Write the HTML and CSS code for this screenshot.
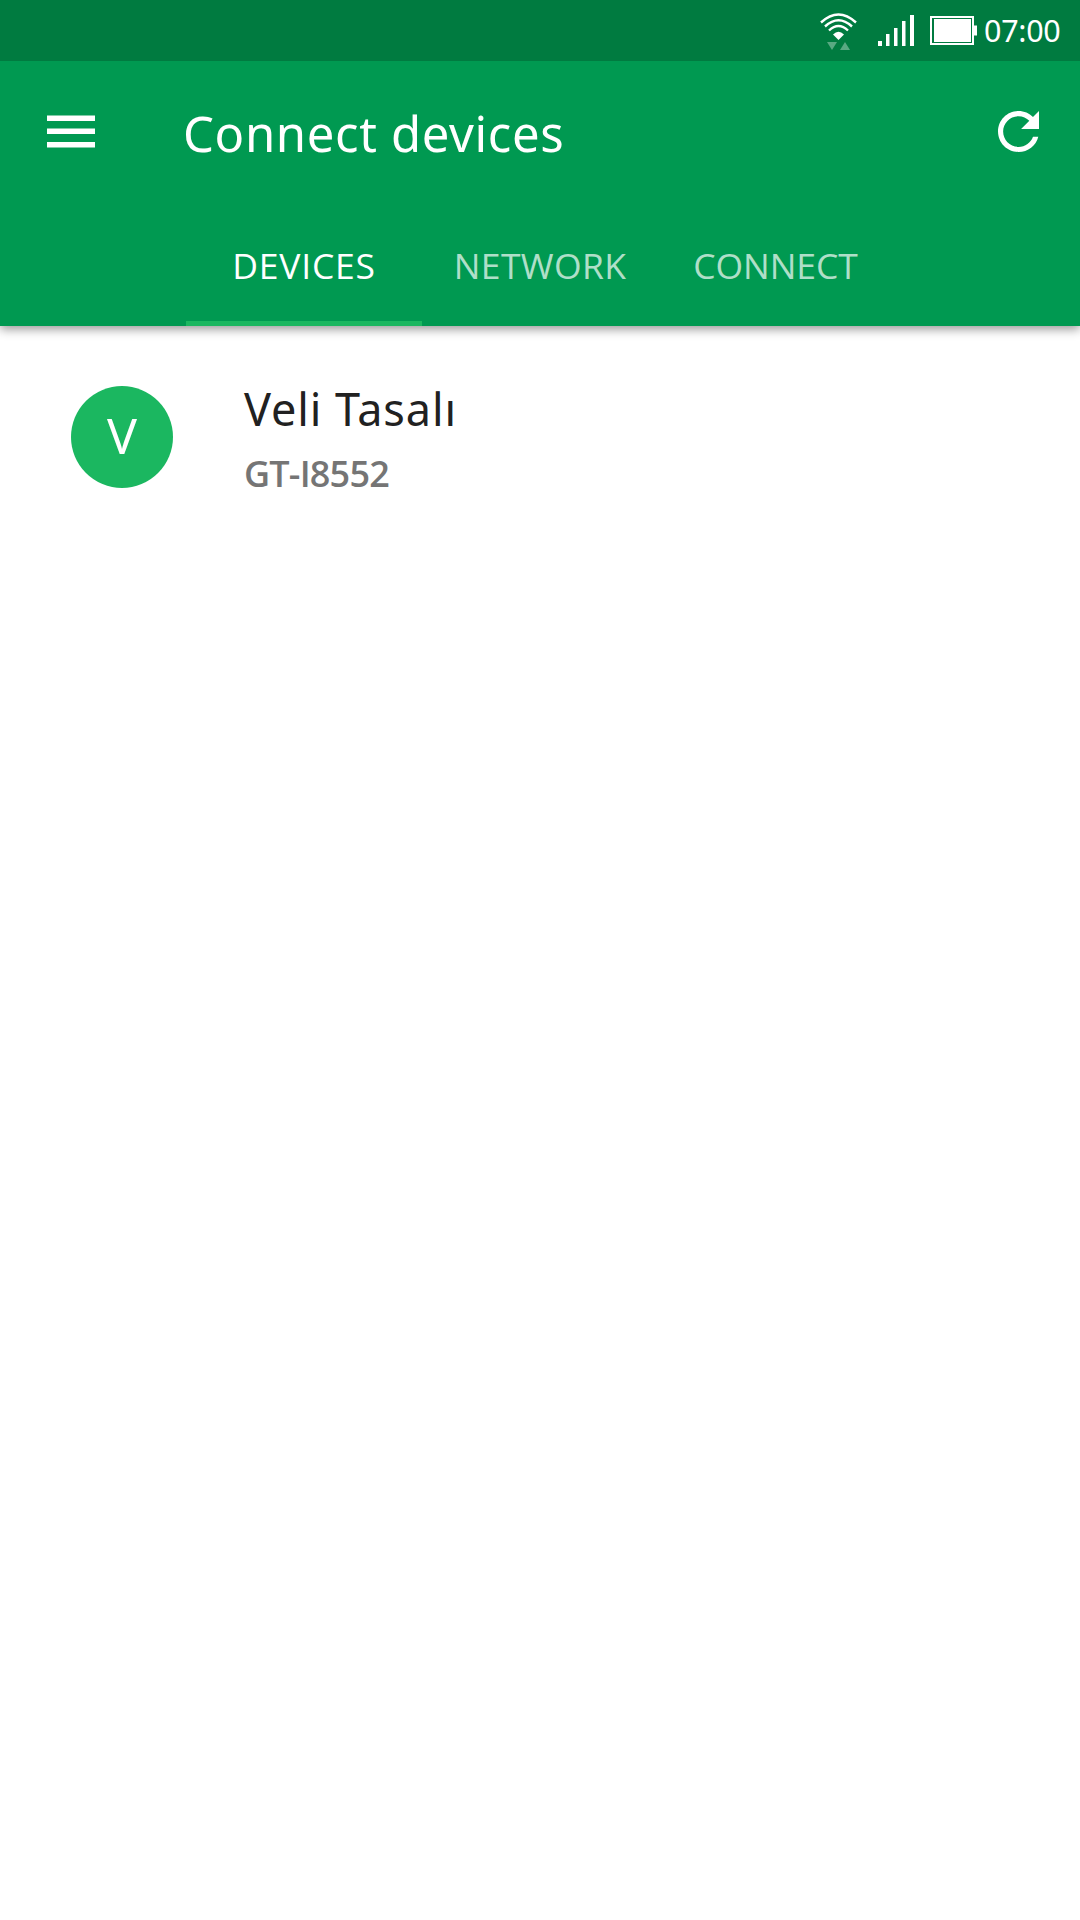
FILE: index.html
```html
<!DOCTYPE html>
<html lang="en">
<head>
<meta charset="utf-8">
<title>Connect devices</title>
<link rel="stylesheet" href="styles.css">
</head>
<body>
<div class="status-bar">
  <svg class="status-icons" width="180" height="61" viewBox="0 0 180 61" aria-hidden="true">
    <g fill="none" stroke="#fff" stroke-width="2.4">
      <path d="M21 22.5Q38.5 6.500 56 22.500"/>
      <path d="M25 26.500Q38.500 14 52 26.500"/>
      <path d="M29 30.500Q38.500 21.500 48 30.500"/>
    </g>
    <path d="M33 34.500Q38.500 29 44 34.500L38.500 40Z" fill="#fff"/>
    <path d="M27 42H37L32 50ZM40 50H50L45 42Z" fill="#fff" fill-opacity=".35"/>
    <path d="M78 41h4v5h-4zM86 34h3.500v12H86zM94 28h3.500v18H94zM102 21h3.500v25H102zM110 15h4v31h-4z" fill="#fff"/>
    <path d="M131 17h42v27h-42z" fill="none" stroke="#fff" stroke-width="2"/>
    <path d="M134 19h37v23h-37zM174 25.500h3v10h-3z" fill="#fff"/>
  </svg>
  <span class="clock">07:00</span>
</div>
<header class="app-bar">
  <div class="toolbar">
    <svg class="menu-icon" width="48" height="34" viewBox="0 0 48 34" aria-label="Menu">
      <path d="M0 .5h48v5.500H0zM0 13.500h48v5.500H0zM0 27h48v5.500H0z" fill="#fff"/>
    </svg>
    <h1 class="title">Connect devices</h1>
    <svg class="refresh-icon" width="41" height="41" viewBox="4 4 16 16" aria-label="Refresh">
      <path d="M17.650 6.350C16.200 4.900 14.210 4 12 4c-4.420 0-7.990 3.580-7.990 8s3.570 8 7.990 8c3.730 0 6.840-2.550 7.730-6h-2.080c-.82 2.330-3.040 4-5.650 4-3.310 0-6-2.690-6-6s2.690-6 6-6c1.660 0 3.140.69 4.220 1.780L13 11h7V4l-2.350 2.350z" fill="#fff"/>
    </svg>
  </div>
  <nav class="tabs">
    <div class="tab tab-active"><span class="label-devices">DEVICES</span></div>
    <div class="tab"><span class="label-network">NETWORK</span></div>
    <div class="tab"><span class="label-connect">CONNECT</span></div>
  </nav>
</header>
<main class="device-list">
  <div class="device">
    <div class="avatar">V</div>
    <div class="device-text">
      <div class="device-name">Veli Tasalı</div>
      <div class="device-model">GT-I8552</div>
    </div>
  </div>
</main>
</body>
</html>
```
FILE: styles.css
```css
* { box-sizing: border-box; }
body {
  margin: 0;
  min-height: 1920px;
  background: #fff;
  font-family: "Noto Sans", sans-serif;
  color: #212121;
}
.status-bar {
  display: flex;
  align-items: center;
  justify-content: flex-end;
  height: 61px;
  padding-right: 19px;
  background: #007b40;
  color: #fff;
}
.status-icons { flex: none; }
.clock {
  width: 81px;
  padding-left: 4px;
  font-size: 30.5px;
  line-height: 58px;
  letter-spacing: -.3px;
  white-space: nowrap;
  margin-top: -2px;
}
.app-bar {
  height: 265px;
  background: #009951;
  color: #fff;
  box-shadow: 0 3px 10px rgba(0, 0, 0, .42);
  clip-path: inset(0 0 -20px 0);
}
.toolbar {
  display: flex;
  align-items: center;
  height: 144px;
  padding: 0 41px 0 47px;
}
.menu-icon { margin: -2px 88px 0 0; }
.title {
  flex: 1;
  margin: 0;
  font-size: 49px;
  font-weight: 400;
  line-height: 66px;
  letter-spacing: .64px;
  white-space: nowrap;
}
.refresh-icon { margin-top: -3px; }
.tabs {
  display: grid;
  grid-template-columns: 236px 238px 234px;
  height: 121px;
  padding-left: 186px;
}
.tab {
  display: flex;
  align-items: center;
  justify-content: center;
  padding-top: 3px;
  border-bottom: 5px solid transparent;
  font-family: "Open Sans", "Noto Sans", sans-serif;
  font-size: 35.5px;
  color: rgba(255, 255, 255, .7);
}
.tab-active {
  border-bottom-color: #1bb760;
  color: #fff;
}
.label-devices { letter-spacing: .75px; }
.label-network { letter-spacing: .35px; margin-right: 2px; }
.label-connect { letter-spacing: -.1px; margin-right: 3px; }
.device-list { padding: 60px 71px; }
.device { display: flex; gap: 71px; }
.avatar {
  flex: none;
  width: 102px;
  height: 102px;
  border-radius: 50%;
  background: #1bb760;
  color: #fff;
  font-size: 50px;
  line-height: 99px;
  text-align: center;
}
.device-text { margin-top: -8px; white-space: nowrap; }
.device-name {
  font-size: 45px;
  line-height: 62px;
  letter-spacing: .9px;
}
.device-model {
  margin-top: 9px;
  font-family: "Open Sans", "Noto Sans", sans-serif;
  font-size: 36px;
  font-weight: 600;
  line-height: 50px;
  letter-spacing: -.8px;
  color: #757575;
}
```
